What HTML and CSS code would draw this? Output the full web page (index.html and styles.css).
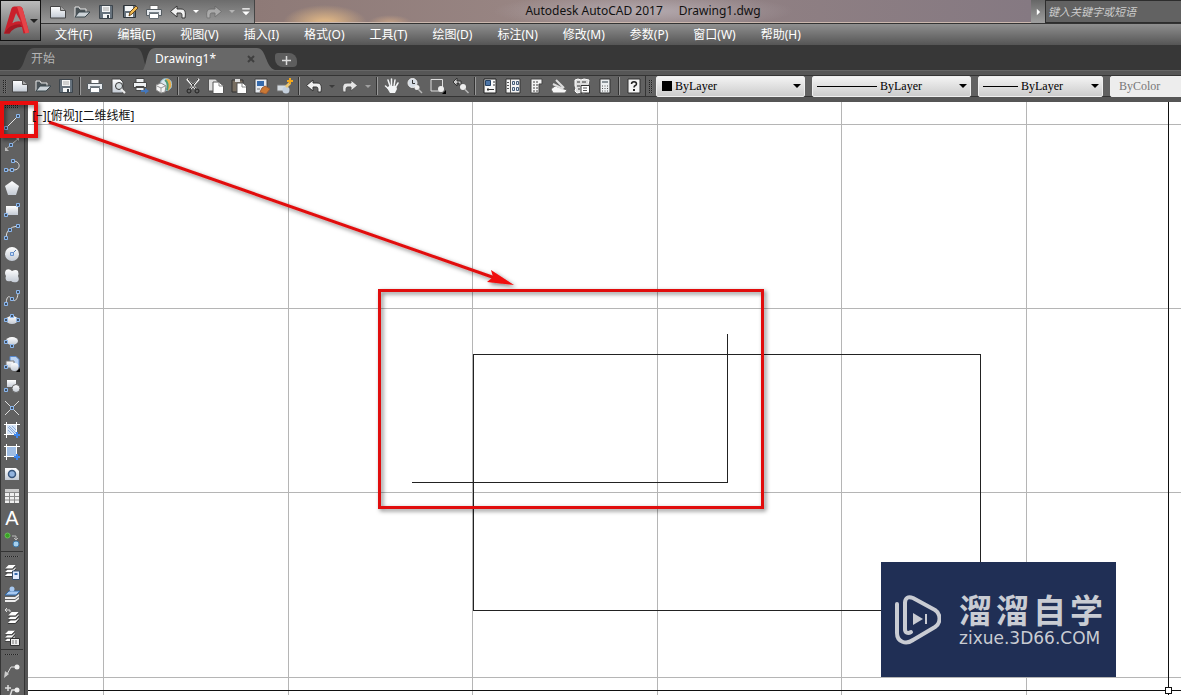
FILE: index.html
```
<!DOCTYPE html>
<html lang="zh-CN">
<head>
<meta charset="utf-8">
<title>Autodesk AutoCAD 2017 Drawing1.dwg</title>
<link rel="stylesheet" href="styles.css">
</head>
<body>
<svg class="defs" aria-hidden="true">
<defs>
<linearGradient id="silver" x1="0" y1="0" x2="0" y2="1"><stop offset="0" stop-color="#fff"/><stop offset="1" stop-color="#c3cad4"/></linearGradient>
<filter id="shade" x="-20%" y="-20%" width="140%" height="140%"><feDropShadow dx="2" dy="2" stdDeviation="2" flood-color="#000" flood-opacity=".5"/></filter>
</defs>
<symbol id="new" viewBox="0 0 16 16"><path d="M.5 2.500h10l5 4v7.500H.5z" fill="url(#silver)" stroke="#444"/><path d="M10.500 2.500v4h5" fill="#aaa" stroke="#555"/></symbol>
<symbol id="open" viewBox="0 0 16 16"><path d="M1 13V3h4l1 2h6v3" fill="#4b5357" stroke="#e6e6e6"/><path d="M1 13l4-5h11l-5 5z" fill="#ccd3d8" stroke="#39464d"/></symbol>
<symbol id="save" viewBox="0 0 16 16"><path d="M1.500 1.500h13v13h-13z" fill="#66727d" stroke="#3d454c"/><path d="M4 2h8v6H4zM5 10h7v4H5z" fill="#f3f5f6"/><path d="M9 11h2v3H9z" fill="#39434b"/><path d="M5 4h6M5 6h6" stroke="#aaa"/></symbol>
<symbol id="saveas" viewBox="0 0 16 16"><path d="M1.500 1.500h12v12h-12z" fill="#66727d" stroke="#2d3338"/><path d="M3 2h8v5H3zM4 9h7v4H4z" fill="#f3f5f6"/><path d="M7 12l1-4 6-6 2 2-6 6z" fill="#f1bb52" stroke="#68481d"/></symbol>
<symbol id="print" viewBox="0 0 16 16"><path d="M4 1.500h8V6H4z" fill="#fff" stroke="#666"/><path d="M.5 5.500h15v6H.5z" fill="#e6eaee" stroke="#555c61"/><path d="M3.500 9.500h9v5h-9z" fill="#fff" stroke="#666e75"/><path d="M3 8.500h10" stroke="#77828a"/></symbol>
<symbol id="undo" viewBox="0 0 16 16"><path d="M.5 7.500L7 2v3h4c4 0 5 3 4 9h-3c0-4 0-5-2-5H7v4z" fill="#f1f1f1" stroke="#363636"/></symbol>
<symbol id="redo" viewBox="0 0 16 16"><path d="M15.500 7.500L9 2v3H5c-4 0-5 3-4 9h3c0-4 0-5 2-5h3v4z" fill="#e4e4e4" stroke="#555"/></symbol>
<symbol id="more" viewBox="0 0 16 16"><path d="M2 3h12" stroke="#fff" stroke-width="2"/><path d="M2 7h12l-6 6z" fill="#fff"/></symbol>
<symbol id="caret" viewBox="0 0 8 6"><path d="M0 1h8L4 5z" fill="currentColor"/></symbol>
<symbol id="preview" viewBox="0 0 16 16"><path d="M2 1h8l3 3v11H2z" fill="url(#silver)" stroke="#444"/><circle cx="9" cy="8" r="3.500" fill="#d5dce0" stroke="#333"/><path d="M11 11l4 4" stroke="#eee" stroke-width="2"/></symbol>
<symbol id="publish" viewBox="0 0 16 16"><path d="M3 .5h8v4H3zM.5 4.500h13v5H.5zM3 8.500h8v4H3z" fill="#edf0f2" stroke="#484848"/><path d="M8 12h4v-2l4 3-4 3v-2H8z" fill="#4377bc"/></symbol>
<symbol id="globe" viewBox="0 0 16 16"><circle cx="10" cy="6.500" r="6" fill="#dce8ee" stroke="#8fb4c6"/><path d="M10 1c4-1 6 4 5 8l-3 4z" fill="#e6ad49"/><path d="M9 2c3 2 3 6 2 10" stroke="#4a9b77" stroke-width="2" fill="none"/><path d="M0 7l5-2 5 3-1 6-4 1-5-3z" fill="#f4f4f4" stroke="#888"/><path d="M1 8l4 2 4-2M5 10v4" stroke="#999" fill="none"/></symbol>
<symbol id="cut" viewBox="0 0 16 16"><path d="M2 1l9 10M14 1L5 11" stroke="#fff" stroke-width="2"/><path d="M3 1l8 10M13 1L5 11" stroke="#222"/><circle cx="4" cy="13" r="2" fill="none" stroke="#222"/><circle cx="12" cy="13" r="2" fill="none" stroke="#222"/></symbol>
<symbol id="copy" viewBox="0 0 16 16"><path d="M.5 1h7l3 3v9H.5z" fill="#ddd" stroke="#555"/><path d="M5 4h6l4.500 4v7.500H5z" fill="#fff" stroke="#555"/><path d="M11 4v4h4" fill="none" stroke="#888"/></symbol>
<symbol id="paste" viewBox="0 0 16 16"><path d="M1 2h11v12H1z" fill="#776d60" stroke="#333"/><path d="M4 1h5v3H4z" fill="#ddd"/><path d="M6 5h6l3.500 3v7.500H6z" fill="#fff" stroke="#555"/><path d="M11 5v4h4" fill="none" stroke="#888"/></symbol>
<symbol id="match" viewBox="0 0 16 16"><path d="M1 1h12v14H1z" fill="#e6eaf0" stroke="#444"/><path d="M3 3h7v5H3z" fill="#356aac"/><path d="M8 10l3-2 5 3-4 5-6-2z" fill="#c97834" stroke="#9b5b35"/><path d="M3 11h3" stroke="#777"/></symbol>
<symbol id="editblock" viewBox="0 0 16 16"><path d="M0 7h10v6H0z" fill="#d4dbe1" stroke="#777"/><circle cx="9" cy="12" r="3.500" fill="#c4cfdc"/><path d="M8 8l4-4 2 2-4 4z" fill="#eac675"/><path d="M13 0v6M10 3h6" stroke="#f5a91b" stroke-width="2"/></symbol>
<symbol id="hand" viewBox="0 0 16 16"><path d="M4 2l2 6M7.500 1v8M11 2l-1 6M14 5l-3 5M1.500 8L6 12" stroke="#f3f5f6" stroke-width="1.500" stroke-linecap="round"/><path d="M5 8h7l1 3-2 4H6l-3-5z" fill="#f3f5f6"/></symbol>
<symbol id="zoomrt" viewBox="0 0 16 16"><circle cx="5.500" cy="5" r="4.500" fill="#d5dce4" stroke="#eee"/><path d="M5.500 2v3.500H8" fill="none" stroke="#333"/><circle cx="10" cy="9.500" r="2.500" fill="#eee"/><path d="M11 11l4 4" stroke="#bbb" stroke-width="1.500"/></symbol>
<symbol id="zoomwin" viewBox="0 0 16 16"><path d="M1 1.500h11.500V13H1z" fill="none" stroke="#ddd"/><circle cx="11" cy="11" r="3" fill="#eee"/><path d="M12 16h4v-4z" fill="#000"/></symbol>
<symbol id="zoomprev" viewBox="0 0 16 16"><path d="M0 4l4-4v3h4v4H6V5H4v3z" fill="#ccc" stroke="#333"/><circle cx="10" cy="9" r="3" fill="#eee"/><path d="M11.500 11l4 4" stroke="#bbb" stroke-width="1.500"/></symbol>
<symbol id="props" viewBox="0 0 16 16"><path d="M2 1h12v14H2z" fill="#f8f8f8" stroke="#222"/><path d="M3.500 2.500h5v5h-5z" fill="#4c75a8" stroke="#254264"/><path d="M11 4h2M11 7h2M5 11.500h7M6 10v3" stroke="#333"/></symbol>
<symbol id="center" viewBox="0 0 16 16"><path d="M1 1h14v14H1z" fill="#f3f3f3" stroke="#333"/><path d="M5.500 1v14M2 4.500h2M2 7.500h2M2 10.500h2" stroke="#555"/><path d="M7.500 3.500h2v3h-2zM11.500 3.500h2v3h-2zM7.500 9.500h2v3h-2zM11.500 9.500h2v3h-2z" fill="#dae5f1" stroke="#475d78"/></symbol>
<symbol id="palette" viewBox="0 0 16 16"><path d="M3 1h11v5h-3v9H3z" fill="#f3f3f3" stroke="#444"/><path d="M5 4h2M8 4h2M5 7h2M8 7h2M5 10h2M8 10h2M5 13h2M8 13h2" stroke="#999" stroke-width="2"/></symbol>
<symbol id="sheets" viewBox="0 0 16 16"><path d="M0 11l4-3 12 4-2 3H2z" fill="#f6f6f6" stroke="#666"/><path d="M5 2l8 8M2 6l10 5" stroke="#ddd" stroke-width="2"/></symbol>
<symbol id="markup" viewBox="0 0 16 16"><path d="M1 2l3-1 3 1 3-1 5 1-1 5 1 2-2 2 1 3-5 1-2-1-4 1-2-2 1-3-1-2z" fill="#ddd" stroke="#fff"/><path d="M3 4h3M8 4h4M3 8h3M4 11h2" stroke="#333"/><path d="M7 7.500h8.500v7.500H7z" fill="#fff" stroke="#333"/><path d="M9 10h4M9 12.500h4" stroke="#555"/></symbol>
<symbol id="calc" viewBox="0 0 16 16"><path d="M3 1h10v14H3z" fill="#eceff1" stroke="#333"/><path d="M5 3h6v2H5z" fill="#8c959b"/><path d="M5 8h6M5 10.500h6M5 13h6" stroke="#555" stroke-dasharray="1 1.500"/></symbol>
<symbol id="help" viewBox="0 0 16 16"><path d="M2 1h12v14H2z" fill="#f4f4f4" stroke="#333"/><path d="M5.500 6c0-3 5-3 5 0 0 2-2.500 1-2.500 3.500" fill="none" stroke="#222" stroke-width="1.500"/><path d="M7 11h2v2H7z" fill="#222"/></symbol>
<symbol id="grab" viewBox="0 0 4 4"><path d="M.5.5h3v3h-3z" fill="#405064" stroke="#8bb7ee"/></symbol>
<symbol id="line" viewBox="0 0 16 16"><path d="M2 14L14 2" stroke="#e5e5e5"/><use href="#grab" x="0" y="12" width="4" height="4"/><use href="#grab" x="12" y="0" width="4" height="4"/></symbol>
<symbol id="xline" viewBox="0 0 16 16"><path d="M1 14L15 2" stroke="#bbb"/><path d="M1 11v4h4zM11 1h4v4z" fill="#bbb"/><use href="#grab" x="5" y="7" width="4" height="4"/></symbol>
<symbol id="pline" viewBox="0 0 16 16"><path d="M2 12h8c7 0 7-9-1-9" stroke="#ddd" fill="none"/><use href="#grab" x="0" y="10" width="4" height="4"/><use href="#grab" x="6" y="10" width="4" height="4"/><use href="#grab" x="7" y="1" width="4" height="4"/></symbol>
<symbol id="polygon" viewBox="0 0 16 16"><path d="M8 1l7 5-3 9H4L1 6z" fill="url(#silver)"/></symbol>
<symbol id="rect" viewBox="0 0 16 16"><path d="M2 4h12v9H2z" fill="url(#silver)"/><use href="#grab" x="0" y="11" width="4" height="4"/><use href="#grab" x="12" y="1" width="4" height="4"/></symbol>
<symbol id="arc" viewBox="0 0 16 16"><path d="M2 14Q2 3 14 2" stroke="#ddd" fill="none"/><use href="#grab" x="0" y="12" width="4" height="4"/><use href="#grab" x="4" y="4" width="4" height="4"/><use href="#grab" x="12" y="0" width="4" height="4"/></symbol>
<symbol id="circle" viewBox="0 0 16 16"><circle cx="8" cy="8" r="7" fill="url(#silver)"/><path d="M8 8l4-4" stroke="#5179ac"/><path d="M6.500 6.500h3v3h-3z" fill="#c6daf5" stroke="#6792ce"/></symbol>
<symbol id="cloud" viewBox="0 0 16 16"><path d="M2 2q3-2 6 1 4-2 6 0 1 3 0 5 2 4-1 6-4 1-6-1-4 1-5-1-1-2 0-4-2-3 0-6z" fill="url(#silver)"/></symbol>
<symbol id="spline" viewBox="0 0 16 16"><path d="M2 14C3 2 7 8 9 10s5-1 5-8" stroke="#ddd" fill="none"/><use href="#grab" x="0" y="12" width="4" height="4"/><use href="#grab" x="6" y="7" width="4" height="4"/><use href="#grab" x="12" y="0" width="4" height="4"/></symbol>
<symbol id="ellipse" viewBox="0 0 16 16"><ellipse cx="8" cy="8" rx="6" ry="4" fill="url(#silver)"/><use href="#grab" x="0" y="6" width="4" height="4"/><use href="#grab" x="12" y="6" width="4" height="4"/><use href="#grab" x="6" y="2" width="4" height="4"/></symbol>
<symbol id="elarc" viewBox="0 0 16 16"><ellipse cx="8" cy="7" rx="6" ry="4" fill="url(#silver)"/><use href="#grab" x="0" y="6" width="4" height="4"/><use href="#grab" x="6" y="10" width="4" height="4"/></symbol>
<symbol id="insert" viewBox="0 0 16 16"><path d="M6 .5h6l3 3V11H6z" fill="#bcd4f4" stroke="#5889cf"/><path d="M2 5h8v7H2z" fill="url(#silver)" stroke="#777"/><circle cx="10.500" cy="11" r="4" fill="url(#silver)"/><use href="#grab" x="0" y="9" width="4" height="4"/><path d="M12 16h4v-4z"/></symbol>
<symbol id="block" viewBox="0 0 16 16"><path d="M3 2h9v7H3z" fill="url(#silver)"/><circle cx="12" cy="10.500" r="4" fill="url(#silver)" stroke="#666"/><use href="#grab" x="0" y="10" width="4" height="4"/></symbol>
<symbol id="point" viewBox="0 0 16 16"><path d="M1 1l14 14M1 15L15 1" stroke="#ddd"/><use href="#grab" x="6" y="6" width="4" height="4"/></symbol>
<symbol id="hatch" viewBox="0 0 16 16"><path d="M3 3h10v10H3z" fill="#d6e4f6"/><path d="M2.500 0v16M12.500 0v16M0 2.500h16M0 12.500h16" stroke="#fff"/><path d="M4 5l7 7M5 4l7 7M8 4l4 4M4 8l4 4" stroke="#8cacd8"/><path d="M10 13h6M13 10v6" stroke="#3d85eb" stroke-width="2"/></symbol>
<symbol id="gradient" viewBox="0 0 16 16"><path d="M3 3h10v10H3z" fill="#9ebce3"/><path d="M2.500 0v16M12.500 0v16M0 2.500h16M0 12.500h16" stroke="#fff"/><path d="M10 13h6M13 10v6" stroke="#3d85eb" stroke-width="2"/></symbol>
<symbol id="region" viewBox="0 0 16 16"><path d="M1 2h11l3 3v9H1z" fill="url(#silver)"/><circle cx="8" cy="8" r="3.500" fill="#92b3de" stroke="#36547b" stroke-width="1.500"/></symbol>
<symbol id="table" viewBox="0 0 16 16"><path d="M1 1h14v14H1z" fill="#eee"/><path d="M1 1h14v3H1z" fill="#ccc"/><path d="M1 4.500h14M1 8.500h14M1 12h14M5.500 5v10M10.500 5v10" stroke="#888"/></symbol>
<symbol id="add" viewBox="0 0 16 16"><circle cx="3.500" cy="3.500" r="2.500" fill="#39a324" stroke="#68c357"/><circle cx="12" cy="12" r="3" fill="#a7d0ed" stroke="#3b79aa"/><path d="M8 4h4v4M10 6l2 2 2-2" fill="none" stroke="#bbb"/></symbol>
<symbol id="stack" viewBox="0 0 14 14"><path d="M1 5l4-4h8L9 5zM1 9l3-3h6l2-2h1L9 9zM1 13l3-3h6l2-2h1l-4 5z" fill="#fff"/><path d="M1 5.500h8l4-4M1 9.500h8l4-4M1 13.500h8l4-4" stroke="#333" fill="none"/></symbol>
<symbol id="layers" viewBox="0 0 16 16"><use href="#stack" x="0" y="0" width="13" height="13"/><path d="M8.500 7h7v8.500h-7z" fill="#dfeafb" stroke="#34506d"/><path d="M10.500 9h3v2h-3z" fill="#356aac"/></symbol>
<symbol id="current" viewBox="0 0 16 16"><path d="M1 9l4-4h11l-4 4z" fill="#a7c8f0" stroke="#316ba9"/><path d="M1 11h10l4-3v2l-4 3H1zM1 14h10l4-3v2l-4 3H1z" fill="#eee"/><circle cx="8" cy="3" r="2.500" fill="#a7c8f0"/></symbol>
<symbol id="layprev" viewBox="0 0 16 16"><use href="#stack" x="3" y="3" width="13" height="13"/><path d="M3 0L1 2l2 2M1 2h5v2" stroke="#ddd" fill="none"/></symbol>
<symbol id="laystate" viewBox="0 0 16 16"><use href="#stack" x="0" y="0" width="12" height="12"/><path d="M6.500 8.500h9v7h-9z" fill="#eee" stroke="#333"/><path d="M8 11h6M8 13h6" stroke="#777" stroke-dasharray="2 1"/></symbol>
<symbol id="leader" viewBox="0 0 16 16"><path d="M12 5H7L2 14" stroke="#ddd" fill="none"/><circle cx="13" cy="5" r="2.500" fill="#eee"/><path d="M0 16l1-7 4 3z" fill="#ccc"/></symbol>
<symbol id="addleader" viewBox="0 0 16 16"><path d="M12 6H8L5 15M4 1v6M1 4h6" stroke="#ddd" stroke-width="1.500" fill="none"/><circle cx="13" cy="6" r="2.500" fill="#eee"/></symbol>
</svg>

<header class="header">
  <button class="app" aria-label="A">
    <svg class="app-mark" viewBox="0 0 28 30"><path d="M0 29L8 2q1-2 3-2h6q2 0 3 2l7 26-6 1-2-8q-5-1-10 1l-3 7z" fill="#c91f2b"/><path d="M13 7l-4 11q4-3 9-2z" fill="#949494"/><path d="M0 29q5-10 17-10l3 3q-9-1-14 7z" fill="#a31923"/><path d="M17 0q2 0 3 2l7 26-4 1L14 0z" fill="#e54449"/></svg>
    <svg class="caret"><use href="#caret"/></svg>
  </button>
  <div class="titlebar">
    <div class="quick">
      <button aria-label="新建"><svg><use href="#new"/></svg></button>
      <button aria-label="打开"><svg><use href="#open"/></svg></button>
      <button aria-label="保存"><svg><use href="#save"/></svg></button>
      <button aria-label="另存为"><svg><use href="#saveas"/></svg></button>
      <button aria-label="打印"><svg><use href="#print"/></svg></button>
      <button aria-label="放弃"><svg><use href="#undo"/></svg></button>
      <button class="drop" aria-label="放弃列表"><svg class="caret"><use href="#caret"/></svg></button>
      <button class="faded" aria-label="重做"><svg><use href="#redo"/></svg></button>
      <button class="drop faded" aria-label="重做列表"><svg class="caret"><use href="#caret"/></svg></button>
      <button class="more" aria-label="更多"><svg><use href="#more"/></svg></button>
    </div>
    <div class="title"><span>Autodesk AutoCAD 2017</span><span>Drawing1.dwg</span></div>
    <button class="expand" aria-label="展开"><svg viewBox="0 0 6 8"><path d="M1 0l4 4-4 4z" fill="#fff"/></svg></button>
    <input class="search" aria-label="搜索" placeholder="键入关键字或短语">
  </div>
  <nav class="menus">
    <button>文件(F)</button><button>编辑(E)</button><button>视图(V)</button><button>插入(I)</button><button>格式(O)</button><button>工具(T)</button><button>绘图(D)</button><button>标注(N)</button><button>修改(M)</button><button>参数(P)</button><button>窗口(W)</button><button>帮助(H)</button>
  </nav>
</header>

<div class="tabs">
  <button class="tab"><svg class="tab-shape" viewBox="0 0 130 23" preserveAspectRatio="none"><path d="M0 23C8 20 6 1 16 1H118C126 1 125 18 130 23z" fill="#515151"/></svg><span>开始</span></button>
  <button class="tab active"><svg class="tab-shape" viewBox="0 0 130 23" preserveAspectRatio="none"><path d="M0 23C4 18 3 1 12 1H112C122 1 120 20 130 23z" fill="#686868"/></svg><span>Drawing1*</span><svg class="close" viewBox="0 0 8 8"><path d="M1 1l6 6M7 1L1 7" stroke="#3f3f3f" stroke-width="2"/></svg></button>
  <button class="plus" aria-label="新图形"><svg viewBox="0 0 9 9"><path d="M4.500 0v9M0 4.500h9" stroke="#ddd" stroke-width="1.500"/></svg></button>
</div>

<div class="toolbar">
  <div class="tools">
    <i class="grip"></i>
    <button aria-label="新建"><svg><use href="#new"/></svg></button>
    <button aria-label="打开"><svg><use href="#open"/></svg></button>
    <button aria-label="保存"><svg><use href="#save"/></svg></button>
    <i class="sep"></i>
    <button aria-label="打印"><svg><use href="#print"/></svg></button>
    <button aria-label="打印预览"><svg><use href="#preview"/></svg></button>
    <button aria-label="发布"><svg><use href="#publish"/></svg></button>
    <button aria-label="三维打印"><svg><use href="#globe"/></svg></button>
    <i class="sep"></i>
    <button aria-label="剪切"><svg><use href="#cut"/></svg></button>
    <button aria-label="复制"><svg><use href="#copy"/></svg></button>
    <button aria-label="粘贴"><svg><use href="#paste"/></svg></button>
    <button aria-label="特性匹配"><svg><use href="#match"/></svg></button>
    <button aria-label="块编辑器"><svg><use href="#editblock"/></svg></button>
    <i class="sep"></i>
    <button aria-label="放弃"><svg><use href="#undo"/></svg></button>
    <button class="drop dark" aria-label="放弃列表"><svg class="caret"><use href="#caret"/></svg></button>
    <button aria-label="重做"><svg><use href="#redo"/></svg></button>
    <button class="drop faded" aria-label="重做列表"><svg class="caret"><use href="#caret"/></svg></button>
    <i class="sep"></i>
    <button aria-label="平移"><svg><use href="#hand"/></svg></button>
    <button aria-label="实时缩放"><svg><use href="#zoomrt"/></svg></button>
    <button aria-label="窗口缩放"><svg><use href="#zoomwin"/></svg></button>
    <button aria-label="上一个"><svg><use href="#zoomprev"/></svg></button>
    <i class="sep"></i>
    <button aria-label="特性"><svg><use href="#props"/></svg></button>
    <button aria-label="设计中心"><svg><use href="#center"/></svg></button>
    <button aria-label="工具选项板"><svg><use href="#palette"/></svg></button>
    <button aria-label="图纸集"><svg><use href="#sheets"/></svg></button>
    <button aria-label="标记集"><svg><use href="#markup"/></svg></button>
    <button aria-label="计算器"><svg><use href="#calc"/></svg></button>
    <i class="sep"></i>
    <button aria-label="帮助"><svg><use href="#help"/></svg></button>
  </div>
  <div class="properties">
    <i class="grip"></i>
    <label class="combo color"><i class="swatch"></i><select aria-label="颜色"><option>ByLayer</option></select><svg class="caret"><use href="#caret"/></svg></label>
    <label class="combo linetype"><i class="stroke"></i><select aria-label="线型"><option>ByLayer</option></select><svg class="caret"><use href="#caret"/></svg></label>
    <label class="combo weight"><i class="stroke"></i><select aria-label="线宽"><option>ByLayer</option></select><svg class="caret"><use href="#caret"/></svg></label>
    <label class="combo plot"><select aria-label="打印样式" disabled><option>ByColor</option></select></label>
  </div>
</div>

<main class="workspace">
  <aside class="side">
    <i class="grip"></i>
    <button aria-label="直线"><svg><use href="#line"/></svg></button>
    <button aria-label="构造线"><svg><use href="#xline"/></svg></button>
    <button aria-label="多段线"><svg><use href="#pline"/></svg></button>
    <button aria-label="多边形"><svg><use href="#polygon"/></svg></button>
    <button aria-label="矩形"><svg><use href="#rect"/></svg></button>
    <button aria-label="圆弧"><svg><use href="#arc"/></svg></button>
    <button aria-label="圆"><svg><use href="#circle"/></svg></button>
    <button aria-label="修订云线"><svg><use href="#cloud"/></svg></button>
    <button aria-label="样条曲线"><svg><use href="#spline"/></svg></button>
    <button aria-label="椭圆"><svg><use href="#ellipse"/></svg></button>
    <button aria-label="椭圆弧"><svg><use href="#elarc"/></svg></button>
    <button aria-label="插入块"><svg><use href="#insert"/></svg></button>
    <button aria-label="创建块"><svg><use href="#block"/></svg></button>
    <button aria-label="点"><svg><use href="#point"/></svg></button>
    <button aria-label="图案填充"><svg><use href="#hatch"/></svg></button>
    <button aria-label="渐变色"><svg><use href="#gradient"/></svg></button>
    <button aria-label="面域"><svg><use href="#region"/></svg></button>
    <button aria-label="表格"><svg><use href="#table"/></svg></button>
    <button class="letter">A</button>
    <button aria-label="添加选定对象"><svg><use href="#add"/></svg></button>
    <i class="grip ruled"></i>
    <button aria-label="图层特性"><svg><use href="#layers"/></svg></button>
    <button aria-label="置为当前"><svg><use href="#current"/></svg></button>
    <button aria-label="上一个图层"><svg><use href="#layprev"/></svg></button>
    <button aria-label="图层状态"><svg><use href="#laystate"/></svg></button>
    <i class="grip ruled"></i>
    <button aria-label="多重引线"><svg><use href="#leader"/></svg></button>
    <button aria-label="添加引线"><svg><use href="#addleader"/></svg></button>
  </aside>
  <section class="canvas">
    <svg class="drawing" aria-hidden="true">
      <g transform="translate(-28 -102)" fill="none" shape-rendering="crispEdges">
        <path d="M103.500 102v2000M288.500 102v2000M472.500 102v2000M657.500 102v2000M841.500 102v2000M1026.500 102v2000M28 124.500h3000M28 308.500h3000M28 492.500h3000M28 677.500h3000" stroke="#b5b5b5"/>
        <path d="M473.500 354.500h507v256h-507zM412 482.500h315.500V334" stroke="#222"/>
        <path d="M1168.500 102v585M1168.500 694v2000M28 690.500h1137M1172 690.500h2000M1165.500 687.500h6v6h-6z" stroke="#111"/>
      </g>
      <g transform="translate(-28 -102)" filter="url(#shade)">
        <path d="M2 103h34v33H2z" fill="none" stroke="#e80e0e" stroke-width="4"/>
        <path d="M379.500 290.500h383v217h-383z" fill="none" stroke="#e11010" stroke-width="3"/>
        <path d="M49 122L495 278" stroke="#e11010" stroke-width="3"/>
        <path d="M514 285l-23-15 2 7-6 5z" fill="#f00a0a"/>
      </g>
    </svg>
    <div class="view">[−][俯视][二维线框]</div>
    <div class="brand">
      <svg class="brand-mark" viewBox="0 0 46 50"><g fill="none" stroke="#c9ccd3" stroke-width="4" stroke-linecap="round" stroke-linejoin="round"><path d="M10 34V8C10 3 13 1 18 3l22 12c6 4 6 13 0 17L18 45C11 50 2 47 2 38V9"/><path d="M10 30v4c0 4 3 5 6 3"/></g><path d="M18 18l10 6-10 6z" fill="#c9ccd3"/><path d="M31 19v10" stroke="#c9ccd3" stroke-width="2"/></svg>
      <div class="brand-text">
        <div class="brand-name"><span>溜</span><span>溜</span><span>自</span><span>学</span></div>
        <div class="brand-site">zixue.3D66.COM</div>
      </div>
    </div>
  </section>
</main>
</body>
</html>
```
FILE: styles.css
```
* { box-sizing: border-box; }
html, body { height: 100%; }
body {
  margin: 0;
  display: flex;
  flex-direction: column;
  overflow: hidden;
  background: #575757;
  color: #fff;
  font: 12px/16px "Noto Sans", "Noto Sans CJK SC", sans-serif;
}
button, input, select { font: inherit; color: inherit; border: 0; padding: 0; margin: 0; background: none; border-radius: 0; }
button { display: flex; align-items: center; justify-content: center; flex: none; }
svg { display: block; flex: none; }
.defs { position: absolute; width: 0; height: 0; }
.quick svg, .tools svg, .side svg { width: 16px; height: 16px; }
.quick .caret, .tools .caret { width: 6px; height: 5px; }
.caret { width: 8px; height: 6px; }

.header { display: grid; grid-template-columns: 41px 1fr; grid-template-rows: 24px 21px; flex: none; background: linear-gradient(#555 24px, #8f8f8f 25px, #555 45px); }
.app { grid-row: 1 / 3; align-self: start; height: 41px; border: 1px solid #111; background: linear-gradient(#bbb, #606060); color: #222; }
.app-mark { width: 26px; height: 29px; }
.titlebar { display: flex; min-width: 0; border-bottom: 1px solid #333; background: #857b82; }
.quick { display: flex; align-items: center; padding-left: 5px; border-right: 1px solid #444; background: linear-gradient(#6c6c6c, #989898); }
.quick button { width: 24px; }
.quick .drop { width: 12px; }
.quick .more { width: 16px; }
.quick .more svg { width: 10px; height: 10px; }
.faded { opacity: .4; }
.title {
  display: flex; flex: 1; align-items: center; justify-content: center; gap: 16px;
  border-bottom: 1px solid #cbb8ae; color: #111;
  background:
    radial-gradient(ellipse 42px 18px at 70px 23px, #d8b184 20%, transparent),
    radial-gradient(ellipse 22px 8px at 135px 23px, #c8a385, transparent),
    radial-gradient(ellipse 150px 18px at 50% 50%, #b4aaaf, transparent),
    linear-gradient(90deg, #8e7a77, #988583 35%, #857982);
}
.expand { width: 14px; background: linear-gradient(#666, #a0a0a0); }
.expand svg { width: 5px; height: 8px; }
.search { width: 136px; padding-left: 2px; border: 1px solid #2d2d2d; border-right: 0; background: #626262; font-size: 11px; font-style: italic; }
.search::placeholder { color: #ccc; opacity: 1; }
.menus { display: flex; gap: 25px; padding-left: 14px; background: linear-gradient(#8f8f8f, #555); }

.tabs { display: flex; align-items: flex-end; flex: none; height: 25px; padding-left: 18px; background: #373737; }
.tab { position: relative; z-index: 0; width: 130px; height: 23px; justify-content: flex-start; padding-left: 13px; color: #b5b5b5; }
.tab.active { width: 132px; margin-left: -5px; padding: 0 20px 0 12px; justify-content: space-between; color: #fff; z-index: 1; }
.tab-shape { position: absolute; inset: 0; width: 100%; height: 100%; z-index: -1; }
.close { width: 8px; height: 8px; }
.plus { width: 22px; height: 14px; margin-bottom: 3px; background: #5d5d5d; border-radius: 3px 8px 4px 8px; }
.plus svg { width: 9px; height: 9px; }

.toolbar { display: flex; flex: none; height: 31px; padding: 4px 0 4px; border-top: 1px solid #666; background: #565656; overflow: hidden; }
.tools, .properties { display: flex; align-items: center; border: solid #343434; border-width: 1px 0; background: #616161; }
.tools { flex: none; border-right: 1px solid #343434; }
.tools button { width: 23px; }
.tools .drop { width: 13px; }
.tools .drop.dark { color: #3b3b3b; }
.sep { flex: none; width: 6px; height: 18px; background: linear-gradient(90deg, transparent 2px, #333 2px, #333 3px, #999 3px, #999 4px, transparent 4px); }
.grip {
  flex: none;
  background:
    repeating-linear-gradient(#616161 0 1px, transparent 1px 2px) content-box,
    repeating-linear-gradient(90deg, #222 0 1px, #717171 1px 2px) content-box;
}
.tools .grip, .properties .grip { width: 8px; height: 15px; padding: 0 1px 0 3px; }
.properties { flex: 1; min-width: 0; gap: 7px; color: #000; }
.properties .grip { margin-right: -5px; }
.combo { display: flex; align-items: center; flex: none; height: 21px; padding: 0 3px 0 5px; gap: 3px; border: 1px solid #eee; border-radius: 2px; background: linear-gradient(#f3f3f3, #ccc); font: 12px/16px "Liberation Serif", serif; }
.combo select { flex: 1; min-width: 0; height: 18px; appearance: none; }
.color { width: 149px; }
.linetype { width: 159px; padding-left: 4px; }
.weight { width: 125px; padding-left: 4px; }
.plot { width: 96px; padding-left: 8px; background: #ededed; color: #777; }
.plot select { opacity: 1; }
.swatch { width: 10px; height: 10px; background: #000; }
.stroke { width: 60px; height: 1px; background: #000; }
.weight .stroke { width: 35px; }

.workspace { display: flex; flex: 1; min-height: 0; }
.side { display: flex; flex-direction: column; flex: none; width: 28px; overflow: hidden; border-left: 1px solid #353535; border-right: 3px solid #555; background: linear-gradient(90deg, #616161 23px, #333 23px); }
.side button { width: 22px; height: 22px; }
.side .grip { width: 22px; height: 10px; padding: 3px 4px; }
.side .ruled { border-top: 1px solid #333; }
.side .letter { font: 20px/22px "Liberation Sans", sans-serif; }
.canvas { position: relative; flex: 1; min-width: 0; border-top: 1px solid #555; background: #fff; color: #111; }
.drawing { position: absolute; left: 0; top: 0; width: 100%; height: 100%; overflow: visible; }
.view { position: relative; padding: 6px 4px; }
.brand { position: absolute; right: 65px; bottom: 18px; display: flex; align-items: center; gap: 18px; padding: 28px 13px 28px 14px; background: #202f55; color: #c9ccd3; }
.brand-mark { width: 46px; height: 50px; }
.brand-text { width: 144px; }
.brand-name { display: flex; justify-content: space-between; font: bold 33px/38px "Noto Sans CJK SC", sans-serif; }
.brand-site { font: 17px/21px "DejaVu Sans", sans-serif; white-space: nowrap; }
```
